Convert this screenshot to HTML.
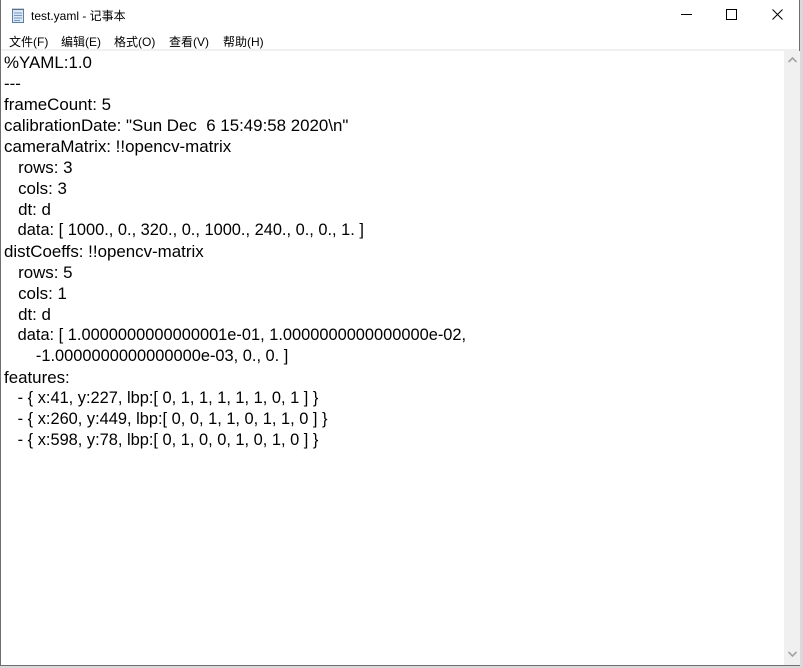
<!DOCTYPE html>
<html><head><meta charset="utf-8"><style>
*{margin:0;padding:0;box-sizing:border-box}
body{width:803px;height:668px;overflow:hidden;background:#d9d9d9;position:relative;font-family:"Liberation Sans","Noto Sans CJK SC",sans-serif}
#win{position:absolute;left:0;top:0;width:800px;height:666px;background:#fff;border:1px solid #6f6f6f;border-top:none}
#title{position:absolute;left:0;top:0;width:798px;height:31px;background:#fff}
#title .t{position:absolute;left:30px;top:7px;font-size:12px;color:#000}
#menu{position:absolute;left:0;top:31px;height:18px;width:798px;background:#fff;font-size:12px}
#menu span{position:absolute;top:2px}
#sep{position:absolute;left:0;top:49px;width:798px;height:2px;background:#f0f0f0}
#edit{position:absolute;left:0;top:51px;width:783px;height:614px;background:#fff}
#txt{position:absolute;left:3px;top:1px;font-family:"Liberation Sans",sans-serif;font-size:16.9px;color:#000}
#txt div{height:21px;line-height:21px;white-space:pre;overflow:visible}
#txt div.s{font-size:16.4px}
#sb{position:absolute;left:783px;top:51px;width:16px;height:614px;background:#f0f0f0}
</style></head><body>
<div id="win">
<div id="title">
<svg style="position:absolute;left:9px;top:7px" width="16" height="17" viewBox="0 0 16 17"><rect x="2.5" y="2.5" width="11" height="13" fill="#dbe9f7" stroke="#5a7fa8"/><path d="M4 6h8M4 8.5h8M4 11h8M4 13.5h6" stroke="#7b98bb"/><path d="M3 2.5v-1M5 2.5v-1M7 2.5v-1M9 2.5v-1M11 2.5v-1M13 2.5v-1" stroke="#444"/></svg>
<span class="t">test.yaml - 记事本</span>
<svg style="position:absolute;left:680px;top:14px" width="12" height="2"><rect width="11" height="1" fill="#000"/></svg>
<svg style="position:absolute;left:725px;top:9px" width="12" height="12"><rect x="0.5" y="0.5" width="10" height="10" fill="none" stroke="#000"/></svg>
<svg style="position:absolute;left:771px;top:9px" width="12" height="12"><path d="M0.5 0.5L10.5 10.5M10.5 0.5L0.5 10.5" stroke="#000"/></svg>
</div>
<div id="menu">
<span style="left:8px">文件(F)</span>
<span style="left:60px">编辑(E)</span>
<span style="left:113px">格式(O)</span>
<span style="left:168px">查看(V)</span>
<span style="left:222px">帮助(H)</span>
</div>
<div id="sep"></div>
<div id="edit"><div id="txt">
<div>%YAML:1.0</div>
<div>---</div>
<div>frameCount: 5</div>
<div>calibrationDate: "Sun Dec  6 15:49:58 2020\n"</div>
<div>cameraMatrix: !!opencv-matrix</div>
<div>   rows: 3</div>
<div>   cols: 3</div>
<div>   dt: d</div>
<div class="s">   data: [ 1000., 0., 320., 0., 1000., 240., 0., 0., 1. ]</div>
<div>distCoeffs: !!opencv-matrix</div>
<div>   rows: 5</div>
<div>   cols: 1</div>
<div>   dt: d</div>
<div class="s">   data: [ 1.0000000000000001e-01, 1.0000000000000000e-02,</div>
<div class="s">       -1.0000000000000000e-03, 0., 0. ]</div>
<div>features:</div>
<div class="s">   - { x:41, y:227, lbp:[ 0, 1, 1, 1, 1, 1, 0, 1 ] }</div>
<div class="s">   - { x:260, y:449, lbp:[ 0, 0, 1, 1, 0, 1, 1, 0 ] }</div>
<div class="s">   - { x:598, y:78, lbp:[ 0, 1, 0, 0, 1, 0, 1, 0 ] }</div>
</div></div>
<div id="sb">
<svg style="position:absolute;left:4px;top:6px" width="9" height="6"><path d="M0.5 5L4.5 1L8.5 5" stroke="#a3a3a3" stroke-width="1.6" fill="none"/></svg>
<svg style="position:absolute;left:4px;top:600px" width="9" height="6"><path d="M0.5 1L4.5 5L8.5 1" stroke="#a3a3a3" stroke-width="1.6" fill="none"/></svg>
</div>
</div>
</body></html>
